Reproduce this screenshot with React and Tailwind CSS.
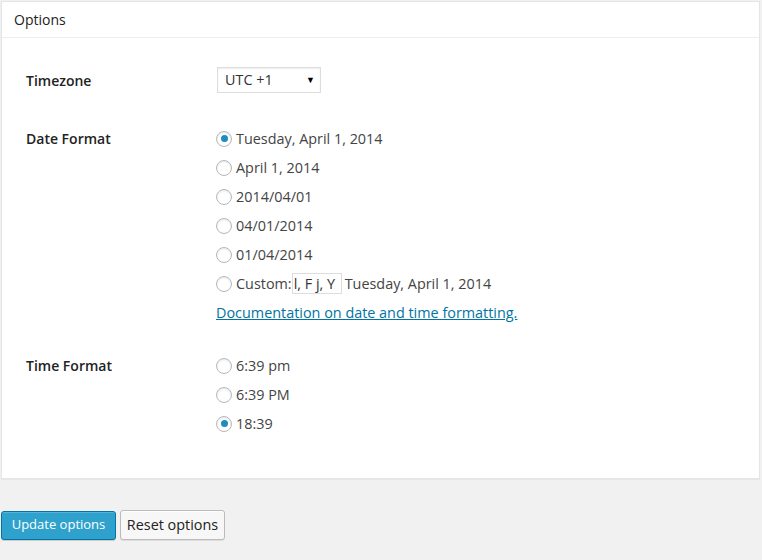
import React from "react";

function Radio({ checked, children }) {
  return (
    <label className="flex h-[29px] items-center">
      <span className="mr-[4px] flex h-[16px] w-[16px] items-center justify-center rounded-full border border-[#b4b9be] bg-white shadow-[inset_0_1px_2px_rgba(0,0,0,0.1)]">
        {checked && <span className="h-[7px] w-[7px] rounded-full bg-[#1e8cbe]" />}
      </span>
      <span className="text-[14.4px] text-[#444]">{children}</span>
    </label>
  );
}

export default function App() {
  return (
    <div className="min-h-[560px] w-[762px] bg-[#f1f1f1] pt-[1px] font-['Open_Sans',sans-serif] text-[#444]">
      <div className="ml-[1px] w-[759px] border border-[#e5e5e5] bg-white shadow-[0_1px_1px_rgba(0,0,0,0.04)]">
        <div className="flex h-[36px] items-center border-b border-[#eee] px-[12px] text-[14px] text-[#222]">
          Options
        </div>
        <div className="pb-[40px]">
          <div className="mt-[29px] flex items-center">
            <div className="w-[214px] pl-[24px] text-[14px] font-semibold text-[#222]">Timezone</div>
            <div className="ml-[1px] flex h-[26px] w-[104px] items-center justify-between border border-[#ddd] pl-[7px] pr-[5px] text-[14.4px] text-[#333] shadow-[inset_0_1px_2px_rgba(0,0,0,0.07)]">
              <span>UTC +1</span>
              <span className="text-[9px] text-black">▼</span>
            </div>
          </div>

          <div className="mt-[31px] flex">
            <div className="flex h-[29px] w-[214px] items-center pl-[24px] text-[14px] font-semibold text-[#222]">
              Date Format
            </div>
            <div className="flex flex-col">
              <Radio checked>Tuesday, April 1, 2014</Radio>
              <Radio>April 1, 2014</Radio>
              <Radio>2014/04/01</Radio>
              <Radio>04/01/2014</Radio>
              <Radio>01/04/2014</Radio>
              <label className="flex h-[29px] items-center text-[14.4px] text-[#444]">
                <span className="mr-[4px] h-[16px] w-[16px] rounded-full border border-[#b4b9be] bg-white shadow-[inset_0_1px_2px_rgba(0,0,0,0.1)]" />
                <span>Custom:</span>
                <span className="flex h-[21px] w-[50px] items-center border border-[#ddd] pl-[1px] text-[14.4px] text-[#333]">
                  l, F j, Y
                </span>
                <span className="ml-[3px]">Tuesday, April 1, 2014</span>
              </label>
              <div className="flex h-[29px] items-center">
                <a href="#" className="text-[14.4px] text-[#0074a2] underline">
                  Documentation on date and time formatting.
                </a>
              </div>
            </div>
          </div>

          <div className="mt-[24px] flex">
            <div className="flex h-[29px] w-[214px] items-center pl-[24px] text-[14px] font-semibold text-[#222]">
              Time Format
            </div>
            <div className="flex flex-col">
              <Radio>6:39 pm</Radio>
              <Radio>6:39 PM</Radio>
              <Radio checked>18:39</Radio>
            </div>
          </div>
        </div>
      </div>

      <div className="ml-[1px] mt-[31px] flex items-center gap-[4px]">
        <button className="h-[29px] w-[115px] rounded-[3px] border border-[#0074a2] bg-[#2ea2cc] text-[13px] text-white shadow-[inset_0_1px_0_rgba(120,200,230,0.5),0_1px_0_rgba(0,0,0,0.15)]">
          Update options
        </button>
        <button className="h-[30px] w-[105px] rounded-[3px] border border-[#bbb] bg-[#f7f7f7] text-[14.4px] text-[#222] shadow-[inset_0_1px_0_#fff,0_1px_0_rgba(0,0,0,0.08)]">
          Reset options
        </button>
      </div>
    </div>
  );
}
